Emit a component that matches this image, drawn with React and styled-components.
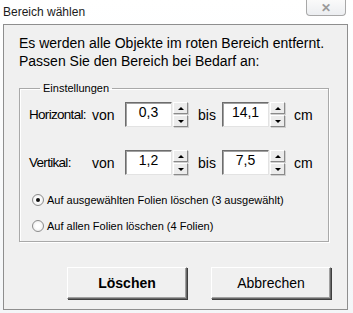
import React from "react";
import styled, { createGlobalStyle } from "styled-components";

const GlobalStyle = createGlobalStyle`
  html, body {
    margin: 0;
    padding: 0;
    background: #f7f8fa;
    font-family: "Liberation Sans", Arial, sans-serif;
  }
`;

const Window = styled.div`
  width: 353px;
  height: 313px;
  display: flex;
  flex-direction: column;
  background: linear-gradient(180deg, #ffffff 0%, #f4f6f8 100%);
`;

const TitleBar = styled.div`
  height: 24px;
  display: flex;
  align-items: flex-start;
  padding-left: 3px;
  box-sizing: border-box;
`;

const Title = styled.span`
  font-size: 12px;
  color: #1b1b1b;
  margin-top: 5px;
`;

const CloseButton = styled.div`
  margin-left: auto;
  margin-right: 7px;
  width: 40px;
  height: 16px;
  box-sizing: border-box;
  border: 1px solid #a8a8a8;
  border-top: none;
  border-radius: 0 0 4px 4px;
  background: linear-gradient(180deg, #fafafa, #eceef1);
  display: flex;
  align-items: center;
  justify-content: center;
  color: #9a9a9a;
  font-size: 12px;
  font-weight: bold;
`;

const Body = styled.div`
  flex: 1;
  margin: 0 5px 3px 3px;
  border: 1px solid #8e8e8e;
  background: #f0f0f0;
  padding: 9px 15px 0 15px;
  color: #000;
`;

const Intro = styled.p`
  margin: 0;
  font-size: 14px;
  line-height: 18px;
`;

const Group = styled.fieldset`
  margin: 12px 3px 0 0;
  padding: 8px 0 0 9px;
  border: 1px solid #a9a9a9;
  box-shadow: inset 1px 1px 0 #fff, 1px 1px 0 #fff;
  height: 160px;
  box-sizing: border-box;
`;

const Legend = styled.legend`
  font-size: 11px;
  padding: 0 3px;
  margin-left: 11px;
  color: #000;
`;

const Row = styled.div`
  display: flex;
  align-items: center;
  height: 25px;
  margin-bottom: ${(p) => p.$gap || 0}px;
  font-size: 14px;
`;

const Label = styled.span`
  width: ${(p) => p.$w}px;
  margin-left: ${(p) => p.$ml || 0}px;
  flex-shrink: 0;
  white-space: nowrap;
  ${(p) => p.$tight && "font-size: 13.5px; letter-spacing: -0.7px;"}
`;

const SpinBox = styled.div`
  display: flex;
  height: 25px;
`;

const Field = styled.div`
  width: 47px;
  box-sizing: border-box;
  background: #fff;
  border: 1px solid;
  border-color: #6d6d6d #e3e3e3 #e3e3e3 #6d6d6d;
  box-shadow: inset 1px 1px 0 #a0a0a0;
  text-align: center;
  font-size: 14px;
  line-height: 16px;
  padding-top: 1px;
`;

const Spinner = styled.div`
  width: 16px;
  display: flex;
  flex-direction: column;
  justify-content: space-between;
  padding: 0 0 0 1px;
  box-sizing: border-box;
`;

const SpinButton = styled.div`
  height: 12px;
  box-sizing: border-box;
  background: #ececec;
  border: 1px solid;
  border-color: #ffffff #8a8a8a #8a8a8a #ffffff;
  box-shadow: 1px 1px 0 #cfcfcf;
  display: flex;
  align-items: center;
  justify-content: center;
`;

const Arrow = styled.span`
  width: 0;
  height: 0;
  border-left: 3px solid transparent;
  border-right: 3px solid transparent;
  ${(p) =>
    p.$down
      ? "border-top: 3px solid #000;"
      : "border-bottom: 3px solid #000;"}
`;

const Options = styled.div`
  display: flex;
  flex-direction: column;
  gap: 13px;
  margin-top: 18px;
  margin-left: 3px;
`;

const Option = styled.label`
  display: flex;
  align-items: center;
  gap: 3px;
  font-size: 11px;
  height: 13px;
`;

const Radio = styled.span`
  width: 12px;
  height: 12px;
  border-radius: 50%;
  box-sizing: border-box;
  border: 1px solid #8c8c8c;
  background: radial-gradient(circle, #ffffff 30%, #e6e6e6 100%);
  display: flex;
  align-items: center;
  justify-content: center;
  &::after {
    content: "";
    width: 4px;
    height: 4px;
    border-radius: 50%;
    background: ${(p) => (p.$checked ? "#111" : "transparent")};
  }
`;

const ButtonRow = styled.div`
  display: flex;
  gap: 24px;
  margin-top: 25px;
  margin-left: 48px;
`;

const Button = styled.button`
  width: 120px;
  height: 32px;
  box-sizing: border-box;
  background: #f0f0f0;
  border: 1px solid;
  border-color: #ffffff #696969 #696969 #ffffff;
  box-shadow: 1px 1px 0 #3f3f3f, inset -1px -1px 0 #a0a0a0;
  font-family: "Liberation Sans", Arial, sans-serif;
  font-size: 14px;
  font-weight: ${(p) => (p.$primary ? "bold" : "normal")};
  color: #000;
  padding: 0;
`;

function Spin({ value }) {
  return (
    <SpinBox>
      <Field>{value}</Field>
      <Spinner>
        <SpinButton>
          <Arrow />
        </SpinButton>
        <SpinButton>
          <Arrow $down />
        </SpinButton>
      </Spinner>
    </SpinBox>
  );
}

function RangeRow({ label, from, to, gap }) {
  return (
    <Row $gap={gap}>
      <Label $w={63} $tight>
        {label}
      </Label>
      <Label $w={33}>von</Label>
      <Spin value={from} />
      <Label $w={24} $ml={10}>
        bis
      </Label>
      <Spin value={to} />
      <Label $w={30} $ml={9}>
        cm
      </Label>
    </Row>
  );
}

export default function App() {
  return (
    <>
      <GlobalStyle />
      <Window>
        <TitleBar>
          <Title>Bereich wählen</Title>
          <CloseButton>✕</CloseButton>
        </TitleBar>
        <Body>
          <Intro>
            Es werden alle Objekte im roten Bereich entfernt.
            <br />
            Passen Sie den Bereich bei Bedarf an:
          </Intro>
          <Group>
            <Legend>Einstellungen</Legend>
            <RangeRow label="Horizontal:" from="0,3" to="14,1" gap={23} />
            <RangeRow label="Vertikal:" from="1,2" to="7,5" />
            <Options>
              <Option>
                <Radio $checked />
                Auf ausgewählten Folien löschen (3 ausgewählt)
              </Option>
              <Option>
                <Radio />
                Auf allen Folien löschen (4 Folien)
              </Option>
            </Options>
          </Group>
          <ButtonRow>
            <Button $primary>Löschen</Button>
            <Button>Abbrechen</Button>
          </ButtonRow>
        </Body>
      </Window>
    </>
  );
}
